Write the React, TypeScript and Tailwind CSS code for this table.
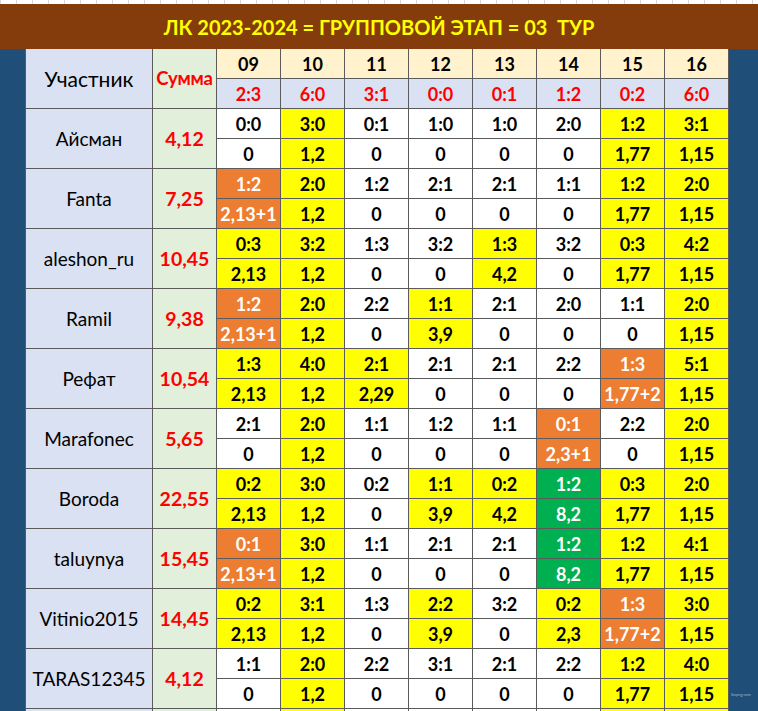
import React from 'react';

type Row = [string, string, string, string, string];

const rows: Row[] = [
  ['Айсман', '4,12', '0:0 3:0 0:1 1:0 1:0 2:0 1:2 3:1', '0 1,2 0 0 0 0 1,77 1,15', 'WYWWWWYY'],
  ['Fanta', '7,25', '1:2 2:0 1:2 2:1 2:1 1:1 1:2 2:0', '2,13+1 1,2 0 0 0 0 1,77 1,15', 'OYWWWWYY'],
  ['aleshon_ru', '10,45', '0:3 3:2 1:3 3:2 1:3 3:2 0:3 4:2', '2,13 1,2 0 0 4,2 0 1,77 1,15', 'YYWWYWYY'],
  ['Ramil', '9,38', '1:2 2:0 2:2 1:1 2:1 2:0 1:1 2:0', '2,13+1 1,2 0 3,9 0 0 0 1,15', 'OYWYWWWY'],
  ['Рефат', '10,54', '1:3 4:0 2:1 2:1 2:1 2:2 1:3 5:1', '2,13 1,2 2,29 0 0 0 1,77+2 1,15', 'YYYWWWOY'],
  ['Marafonec', '5,65', '2:1 2:0 1:1 1:2 1:1 0:1 2:2 2:0', '0 1,2 0 0 0 2,3+1 0 1,15', 'WYWWWOWY'],
  ['Boroda', '22,55', '0:2 3:0 0:2 1:1 0:2 1:2 0:3 2:0', '2,13 1,2 0 3,9 4,2 8,2 1,77 1,15', 'YYWYYGYY'],
  ['taluynya', '15,45', '0:1 3:0 1:1 2:1 2:1 1:2 1:2 4:1', '2,13+1 1,2 0 0 0 8,2 1,77 1,15', 'OYWWWGYY'],
  ['Vitinio2015', '14,45', '0:2 3:1 1:3 2:2 3:2 0:2 1:3 3:0', '2,13 1,2 0 3,9 0 2,3 1,77+2 1,15', 'YYWYWYOY'],
  ['TARAS12345', '4,12', '1:1 2:0 2:2 3:1 2:1 2:2 1:2 4:0', '0 1,2 0 0 0 0 1,77 1,15', 'WYWWWWYY'],
  ['', '', '        ', '        ', 'WYWWWWYY'],
];

const cols = ['09', '10', '11', '12', '13', '14', '15', '16'];
const results = ['2:3', '6:0', '3:1', '0:0', '0:1', '1:2', '0:2', '6:0'];

const bgMap: Record<string, string> = {
  W: 'bg-white text-black',
  Y: 'bg-[#ffff00] text-black',
  O: 'bg-[#ed7d31] text-white',
  G: 'bg-[#00b050] text-white',
};

const cell = 'flex items-center justify-center border-r border-b border-[#5b5b5b] pt-[1px] whitespace-nowrap';

export default function App() {
  return (
    <div
      className="relative w-[758px] h-[711px] overflow-hidden bg-white"
      style={{ fontFamily: 'Lato, "Noto Sans", sans-serif' }}
    >
      <div className="h-[4px] bg-[repeating-linear-gradient(90deg,#d9d9d9_0px,#d9d9d9_1px,#ffffff_1px,#ffffff_16px)]" />
      <div className="h-[45px] bg-[#843c0c] flex items-center justify-center">
        <span className="text-[#ffff00] font-bold text-[20px] whitespace-pre">
          ЛК 2023-2024 = ГРУППОВОЙ ЭТАП = 03  ТУР
        </span>
      </div>
      <div className="flex">
        <div className="w-[26px] shrink-0 bg-[#1f4e79] border-r border-[#5b5b5b]" />
        <div className="grid grid-cols-[127px_64px_repeat(8,64px)] auto-rows-[30px] w-[703px] shrink-0">
          <div className={`${cell} row-span-2 bg-[#d9e1f2] text-black text-[21px]`}>Участник</div>
          <div className={`${cell} row-span-2 bg-[#e2efda] text-[#ff0000] font-bold text-[18.5px] tracking-[-0.2px]`}>Сумма</div>
          {cols.map((c) => (
            <div key={'c' + c} className={`${cell} bg-[#fff2cc] text-black font-bold text-[18px]`}>
              {c}
            </div>
          ))}
          {results.map((r, i) => (
            <div key={'r' + i} className={`${cell} bg-[#d9e1f2] text-[#ff0000] font-bold text-[18px]`}>
              {r}
            </div>
          ))}
          {rows.map(([name, sum, pred, pts, colors], ri) => {
            const p = pred.split(' ');
            const q = pts.split(' ');
            return (
              <React.Fragment key={ri}>
                <div className={`${cell} row-span-2 bg-[#d9e1f2] text-black text-[19px]`}>{name}</div>
                <div className={`${cell} row-span-2 bg-[#e2efda] text-[#ff0000] font-bold text-[19.5px]`}>{sum}</div>
                {p.map((v, i) => (
                  <div key={'p' + i} className={`${cell} ${bgMap[colors[i]]} font-bold text-[18px]`}>
                    {v}
                  </div>
                ))}
                {q.map((v, i) => (
                  <div key={'q' + i} className={`${cell} ${bgMap[colors[i]]} font-bold text-[18px]`}>
                    {v}
                  </div>
                ))}
              </React.Fragment>
            );
          })}
        </div>
        <div className="w-[29px] shrink-0 bg-[#1f4e79] relative">
          <span className="absolute left-[2px] top-[643px] text-[4px] text-[#9fb3c8] whitespace-nowrap">lbspng.com</span>
        </div>
      </div>
    </div>
  );
}
